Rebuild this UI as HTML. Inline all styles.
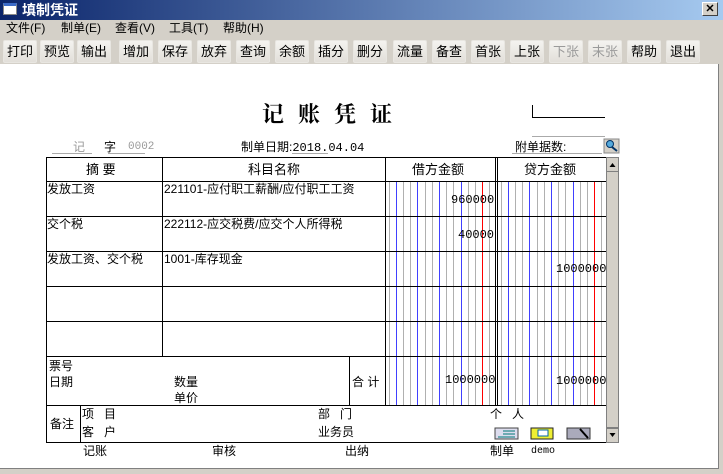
<!DOCTYPE html>
<html><head><meta charset="utf-8"><style>
*{margin:0;padding:0;box-sizing:border-box}
body{width:723px;height:474px;background:#d4d0c8;position:relative;overflow:hidden;font-family:"Liberation Sans","WenQuanYi Zen Hei","Noto Sans CJK SC",sans-serif;font-size:12px;color:#000}
.a{position:absolute;white-space:nowrap;line-height:13px}
#title{position:absolute;left:0;top:0;width:723px;height:20px;background:linear-gradient(90deg,#0a246a,#a6caf0)}
#content{position:absolute;left:0;top:64px;width:719px;height:405px;background:#fff;border-right:1px solid #808080;border-bottom:1px solid #808080}
.btn{position:absolute;top:40px;width:34px;height:23px;background:linear-gradient(#f4f3f0,#e2dfd9);border:1px solid #e8e6e1;border-radius:2px;font-size:13px;text-align:center;line-height:22px}
.g{color:#9a9a9a}
.m{font-family:"Liberation Mono",monospace;font-size:12px}
</style></head><body>
<div id="title"></div>
<div class="a" style="left:3px;top:3px;width:14px;height:12px;background:#fff;border:1px solid #888;border-top:3px solid #3a6ac8"></div>
<div class="a" style="left:22px;top:3px;color:#fff;font-weight:bold;font-size:14px;line-height:14px">填制凭证</div>
<div class="a" style="left:702px;top:2px;width:16px;height:14px;background:#d4d0c8;border:1px solid;border-color:#fff #404040 #404040 #fff;font-size:11px;text-align:center;line-height:12px;font-weight:bold">✕</div>
<div class="a" style="left:6px;top:22px">文件(F)</div>
<div class="a" style="left:61px;top:22px">制单(E)</div>
<div class="a" style="left:115px;top:22px">查看(V)</div>
<div class="a" style="left:169px;top:22px">工具(T)</div>
<div class="a" style="left:223px;top:22px">帮助(H)</div>
<div class="btn" style="left:3px">打印</div>
<div class="btn" style="left:40px">预览</div>
<div class="btn" style="left:77px">输出</div>
<div class="btn" style="left:119px">增加</div>
<div class="btn" style="left:158px">保存</div>
<div class="btn" style="left:197px">放弃</div>
<div class="btn" style="left:236px">查询</div>
<div class="btn" style="left:275px">余额</div>
<div class="btn" style="left:314px">插分</div>
<div class="btn" style="left:353px">删分</div>
<div class="btn" style="left:393px">流量</div>
<div class="btn" style="left:432px">备查</div>
<div class="btn" style="left:471px">首张</div>
<div class="btn" style="left:510px">上张</div>
<div class="btn g" style="left:549px">下张</div>
<div class="btn g" style="left:588px">末张</div>
<div class="btn" style="left:627px">帮助</div>
<div class="btn" style="left:666px">退出</div>
<div id="content"></div>

<div class="a" style="left:262px;top:103px;font-family:'Liberation Serif','Noto Serif CJK SC',serif;font-weight:bold;font-size:22px;line-height:24px;letter-spacing:14px">记账凭证</div>

<svg style="position:absolute;left:0;top:0" width="723" height="474">
<line x1="532.5" y1="105" x2="532.5" y2="117" stroke="#000"/>
<line x1="532" y1="117.5" x2="605" y2="117.5" stroke="#000"/>
<line x1="532" y1="136.5" x2="605" y2="136.5" stroke="#aaa"/>
<line x1="52" y1="153.5" x2="92" y2="153.5" stroke="#aaa"/>
<line x1="108" y1="153.5" x2="145" y2="153.5" stroke="#aaa"/>
<line x1="292" y1="153.5" x2="328" y2="153.5" stroke="#aaa"/>
<line x1="512" y1="153.5" x2="602" y2="153.5" stroke="#aaa"/>
<g id="grid"></g>
<g stroke="#000" fill="none">
<rect x="46.5" y="157.5" width="560" height="285"/>
<line x1="46" y1="181.5" x2="606" y2="181.5"/>
<line x1="46" y1="216.5" x2="606" y2="216.5"/>
<line x1="46" y1="251.5" x2="606" y2="251.5"/>
<line x1="46" y1="286.5" x2="606" y2="286.5"/>
<line x1="46" y1="321.5" x2="606" y2="321.5"/>
<line x1="46" y1="356.5" x2="606" y2="356.5"/>
<line x1="46" y1="405.5" x2="606" y2="405.5"/>
<line x1="162.5" y1="157" x2="162.5" y2="356"/>
<line x1="349.5" y1="356" x2="349.5" y2="405"/>
<line x1="385.5" y1="157" x2="385.5" y2="405"/>
<line x1="495.5" y1="157" x2="495.5" y2="405"/>
<line x1="497.5" y1="157" x2="497.5" y2="405"/>
<line x1="80.5" y1="405" x2="80.5" y2="442"/>
</g>
<rect x="606" y="157" width="13" height="286" fill="#ecebe8"/>
<rect x="606.5" y="157.5" width="12" height="14" fill="#d4d0c8" stroke="#808080"/>
<rect x="606.5" y="171.5" width="12" height="256" fill="#d4d0c8" stroke="#808080"/>
<rect x="606.5" y="428.5" width="12" height="14" fill="#d4d0c8" stroke="#808080"/>
<path d="M609.5 167 L612.5 163 L615.5 167Z" fill="#000"/>
<path d="M609.5 433 L612.5 437 L615.5 433Z" fill="#000"/>
<rect x="604" y="139" width="15" height="14" fill="#d4d0c8" stroke="#888"/>
<circle cx="610" cy="144" r="3.5" fill="#5ad" stroke="#036"/>
<line x1="612" y1="147" x2="617" y2="151" stroke="#036" stroke-width="2"/>
<rect x="495" y="428" width="23" height="11" fill="#dde" stroke="#444"/>
<line x1="503" y1="431" x2="515" y2="431" stroke="#077"/><line x1="503" y1="434" x2="515" y2="434" stroke="#077"/><line x1="498" y1="437" x2="515" y2="437" stroke="#077"/>
<rect x="531" y="428" width="22" height="11" fill="#ee3" stroke="#222"/>
<rect x="538" y="430" width="10" height="6" fill="#fff" stroke="#06a"/>
<rect x="567" y="428" width="23" height="11" fill="#aab" stroke="#333"/>
<line x1="580" y1="429" x2="588" y2="438" stroke="#000" stroke-width="2"/>
</svg>

<div class="a g" style="left:73px;top:141px">记</div>
<div class="a" style="left:104px;top:141px">字</div>
<div class="a g m" style="left:128px;top:141px;font-size:11px">0002</div>
<div class="a" style="left:241px;top:141px">制单日期:<span class="m">2018.04.04</span></div>
<div class="a" style="left:515px;top:141px">附单据数:</div>

<div class="a" style="left:86px;top:163px;font-size:13px">摘 要</div>
<div class="a" style="left:248px;top:163px;font-size:13px">科目名称</div>
<div class="a" style="left:412px;top:163px;font-size:13px">借方金额</div>
<div class="a" style="left:524px;top:163px;font-size:13px">贷方金额</div>

<div class="a" style="left:47px;top:183px">发放工资</div>
<div class="a" style="left:164px;top:183px">221101-应付职工薪酬/应付职工工资</div>
<div class="a" style="left:47px;top:218px">交个税</div>
<div class="a" style="left:164px;top:218px">222112-应交税费/应交个人所得税</div>
<div class="a" style="left:47px;top:253px">发放工资、交个税</div>
<div class="a" style="left:164px;top:253px">1001-库存现金</div>

<div class="a m" style="left:451px;top:194px">960000</div>
<div class="a m" style="left:458px;top:229px">40000</div>
<div class="a m" style="left:556px;top:263px">1000000</div>
<div class="a m" style="left:445px;top:374px">1000000</div>
<div class="a m" style="left:556px;top:375px">1000000</div>

<div class="a" style="left:49px;top:360px">票号</div>
<div class="a" style="left:49px;top:376px">日期</div>
<div class="a" style="left:174px;top:376px">数量</div>
<div class="a" style="left:174px;top:392px">单价</div>
<div class="a" style="left:352px;top:376px">合 计</div>

<div class="a" style="left:50px;top:418px">备注</div>
<div class="a" style="left:82px;top:408px">项 &nbsp; 目</div>
<div class="a" style="left:82px;top:426px">客 &nbsp; 户</div>
<div class="a" style="left:318px;top:408px">部 &nbsp; 门</div>
<div class="a" style="left:318px;top:426px">业务员</div>
<div class="a" style="left:490px;top:408px">个 &nbsp; 人</div>

<div class="a" style="left:83px;top:445px">记账</div>
<div class="a" style="left:212px;top:445px">审核</div>
<div class="a" style="left:345px;top:445px">出纳</div>
<div class="a" style="left:490px;top:445px">制单</div>
<div class="a m" style="left:531px;top:445px;font-size:10px">demo</div>

<script>
(function(){
var s='';
function col(x0){
 for(var k=0;k<15;k++){
  var x=x0+k*7.2; if(x>x0+107)break;
  var c='#b0b0b0';
  if(k==1||k==4||k==7||k==10)c='#4040ff';
  if(k==13)c='#ff0000';
  var xx=Math.round(x)+0.5;
  s+='<line x1="'+xx+'" y1="182" x2="'+xx+'" y2="405" stroke="'+c+'"/>';
 }
}
col(388.5); col(500.5);
document.getElementById('grid').innerHTML=s;
})();
</script>
</body></html>
